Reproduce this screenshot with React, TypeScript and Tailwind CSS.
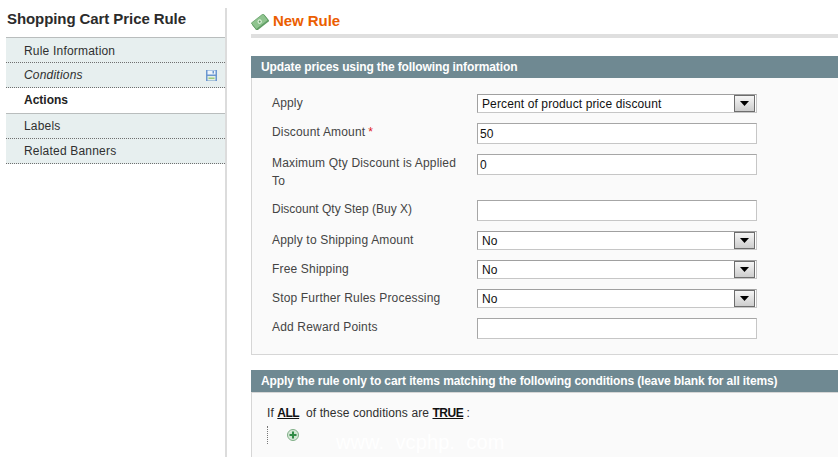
import React from "react";

const font = { fontFamily: '"Liberation Sans", Arial, sans-serif' };

function NavItem({ label, cls = "", icon = false }: { label: string; cls?: string; icon?: boolean }) {
  return (
    <div className={"flex h-[25px] items-center justify-between bg-[#e7efef] border-b border-dotted border-[#6f6f6f] pl-[18px] pr-[8px] text-[12px] tracking-[0.2px] text-[#2f2f2f] " + cls}>
      <span>{label}</span>
      {icon && (
        <svg width="11" height="11" viewBox="0 0 11 11">
          <rect x="0" y="0" width="11" height="11" fill="#6b97d0" />
          <rect x="1.500" y="0.500" width="8" height="4" fill="#eef4fa" />
          <rect x="6.500" y="1" width="1.500" height="2.500" fill="#6b97d0" />
          <rect x="1.500" y="6" width="8" height="4.500" fill="#e6efe4" />
          <rect x="2.500" y="7.500" width="6" height="1.500" fill="#9ccb7c" />
        </svg>
      )}
    </div>
  );
}

function Select({ value }: { value: string }) {
  return (
    <div className="flex h-[19px] w-[280px] items-center justify-between border border-t-[#a0a0a0] border-l-[#a0a0a0] border-r-[#c6c6c6] border-b-[#c6c6c6] bg-white pl-[4px] pr-px text-[12px] tracking-[0.12px] text-[#111]">
      <span>{value}</span>
      <div className="flex h-[17px] w-[21px] items-center justify-center border border-[#6d6d6d] bg-gradient-to-b from-[#f6f6f6] to-[#cdcdcd]">
        <svg width="9" height="5" viewBox="0 0 9 5"><path d="M0 0h9L4.500 5z" fill="#000" /></svg>
      </div>
    </div>
  );
}

function Input({ value = "" }: { value?: string }) {
  return (
    <div className="flex h-[21px] w-[280px] items-center border border-t-[#a6a6a6] border-l-[#a6a6a6] border-r-[#c6c6c6] border-b-[#c6c6c6] bg-white pl-[2px] text-[12px] text-[#111]">
      {value}
    </div>
  );
}

function Row({ label, children, h, star, cls = "tracking-[0.17px]" }: { label: React.ReactNode; children: React.ReactNode; h: string; star?: boolean; cls?: string }) {
  return (
    <div className={"flex " + h}>
      <div className={"w-[205px] pr-[20px] text-[12px] leading-[18px] text-[#444] " + cls}>
        {label}
        {star && <span className="ml-[3px] text-[#e01b1b]">*</span>}
      </div>
      <div>{children}</div>
    </div>
  );
}

export default function App() {
  return (
    <div style={font} className="flex h-[457px] w-[838px] overflow-hidden bg-white">
      <aside className="ml-[6px] mt-[8px] w-[221px] shrink-0 border-r-2 border-[#dcdcdc]">
        <h3 className="h-[29px] pl-px pt-[2px] text-[15px] font-bold leading-[18px] tracking-[-0.08px] text-[#2b2b2b]">Shopping Cart Price Rule</h3>
        <div className="w-[219px] border-t border-[#b9bdbd]">
          <NavItem label="Rule Information" cls="h-[24px] pt-px" />
          <NavItem label="Conditions" cls="italic" icon />
          <div className="flex h-[26px] items-center border-b border-[#b9bdbd] bg-white pb-px pl-[18px] text-[12px] font-bold text-[#222]">Actions</div>
          <NavItem label="Labels" />
          <NavItem label="Related Banners" />
        </div>
      </aside>

      <main className="ml-[24px] min-w-0 flex-1 pt-[12px]">
        <div className="flex h-[26px] items-center border-b-[4px] border-[#dfdfdf] pb-[3px]">
          <svg width="18" height="16" viewBox="0 0 18 16" className="mr-[4px]">
            <g transform="rotate(-38 9 8)">
              <rect x="1" y="5" width="16" height="8" fill="#5f9c63" />
              <rect x="1.500" y="3.500" width="15" height="8" fill="#8fc48f" stroke="#5f9c63" strokeWidth="0.7" />
              <circle cx="9" cy="7.500" r="2.200" fill="#d8eed6" />
              <circle cx="9" cy="7.500" r="1" fill="#5f9c63" />
            </g>
          </svg>
          <span className="text-[15px] font-bold tracking-[-0.05px] text-[#eb5e00]">New Rule</span>
        </div>

        <div className="mt-[18px] flex h-[22px] items-center bg-[#6f8992] pl-[10px] text-[12px] font-bold tracking-[-0.11px] text-white">Update prices using the following information</div>
        <div className="h-[277px] border-y border-l border-[#d6d6d6] border-t-0 bg-[#fafafa] pl-[20px] pt-[16px]">
          <Row label="Apply" h="h-[29px]"><Select value="Percent of product price discount" /></Row>
          <Row label="Discount Amount" star h="h-[31px]"><Input value="50" /></Row>
          <Row label="Maximum Qty Discount is Applied To" h="h-[46px]"><Input value="0" /></Row>
          <Row label="Discount Qty Step (Buy X)" cls="tracking-[0px]" h="h-[31px]"><Input /></Row>
          <Row label="Apply to Shipping Amount" h="h-[29px]"><Select value="No" /></Row>
          <Row label="Free Shipping" h="h-[29px]"><Select value="No" /></Row>
          <Row label="Stop Further Rules Processing" h="h-[29px]"><Select value="No" /></Row>
          <Row label="Add Reward Points" h="h-[21px]"><Input /></Row>
        </div>

        <div className="mt-[15px] flex h-[22px] items-center bg-[#6f8992] pl-[10px] text-[12px] font-bold tracking-[-0.115px] text-white">Apply the rule only to cart items matching the following conditions (leave blank for all items)</div>
        <div className="relative h-[70px] border-t border-l border-[#d6d6d6] bg-[#fafafa] pl-[15px] pt-[11px] text-[12px] tracking-[0.1px] text-[#2f2f2f]">
          <div className="leading-[18px]">
            If <b className="tracking-[-0.5px] text-[#111] underline">ALL</b>&nbsp; of these conditions are <b className="tracking-[-0.5px] text-[#111] underline">TRUE</b> :
          </div>
          <div className="mt-[4px] flex h-[18px] items-center border-l border-dotted border-[#777] pl-[19px]">
            <svg width="12" height="12" viewBox="0 0 12 12">
              <circle cx="6" cy="6" r="5.500" fill="#d9e8da" stroke="#7fae86" strokeWidth="1" />
              <circle cx="6" cy="6" r="3.800" fill="#cfe5d1" />
              <path d="M5 2.500h2V5h2.500v2H7v2.500H5V7H2.500V5H5z" fill="#2f8a45" />
            </svg>
          </div>
          <span className="absolute left-[84px] top-[38px] whitespace-pre text-[20px] leading-[23px] text-white">www.  vcphp.  com</span>
        </div>
      </main>
    </div>
  );
}
